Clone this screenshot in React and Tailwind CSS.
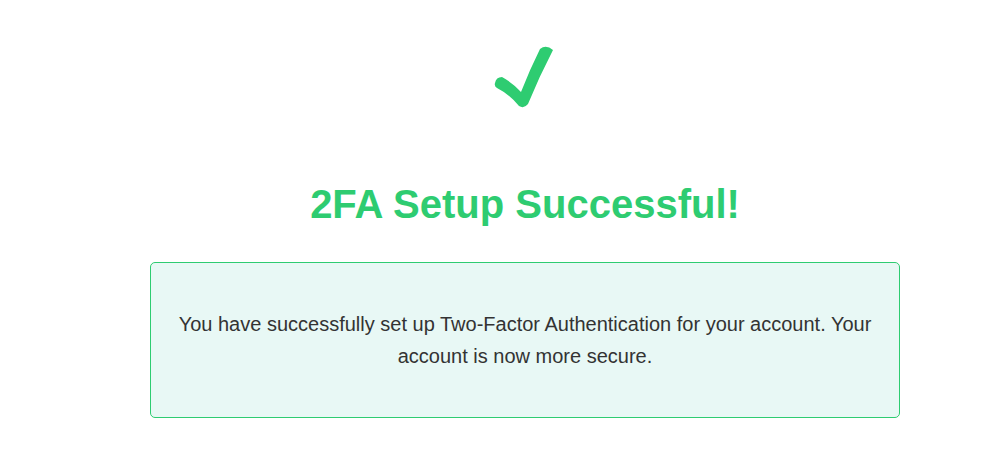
export default function App() {
  return (
    <div className="min-h-[476px] bg-white" style={{ fontFamily: '"Liberation Sans", Arial, sans-serif' }}>
      <div className="ml-[150px] w-[750px] pt-[40px] text-center">
        <div className="flex justify-center">
          <svg width="70" height="72" viewBox="0 0 70 72" aria-label="check">
            <path
              d="M5 43 Q6 37 12 37 Q23 43 31 52 Q40 29 50 9 Q56 4 63 10 Q49 37 38 64 Q34 69 29 66 Q19 54 7 48 Q4 46 5 43 Z"
              fill="#2ecc71"
            />
          </svg>
        </div>
        <h1 className="mt-[68px] text-[40px] font-bold leading-[48px] text-[#2ecc71]">2FA Setup Successful!</h1>
        <div className="mt-[34px] rounded-[5px] border border-[#2ecc71] bg-[#e8f8f5] px-[20px] py-[45px]">
          <p className="text-[20px] leading-[32px] text-[#333]">
            You have successfully set up Two-Factor Authentication for your account. Your account is now more secure.
          </p>
        </div>
      </div>
    </div>
  );
}
